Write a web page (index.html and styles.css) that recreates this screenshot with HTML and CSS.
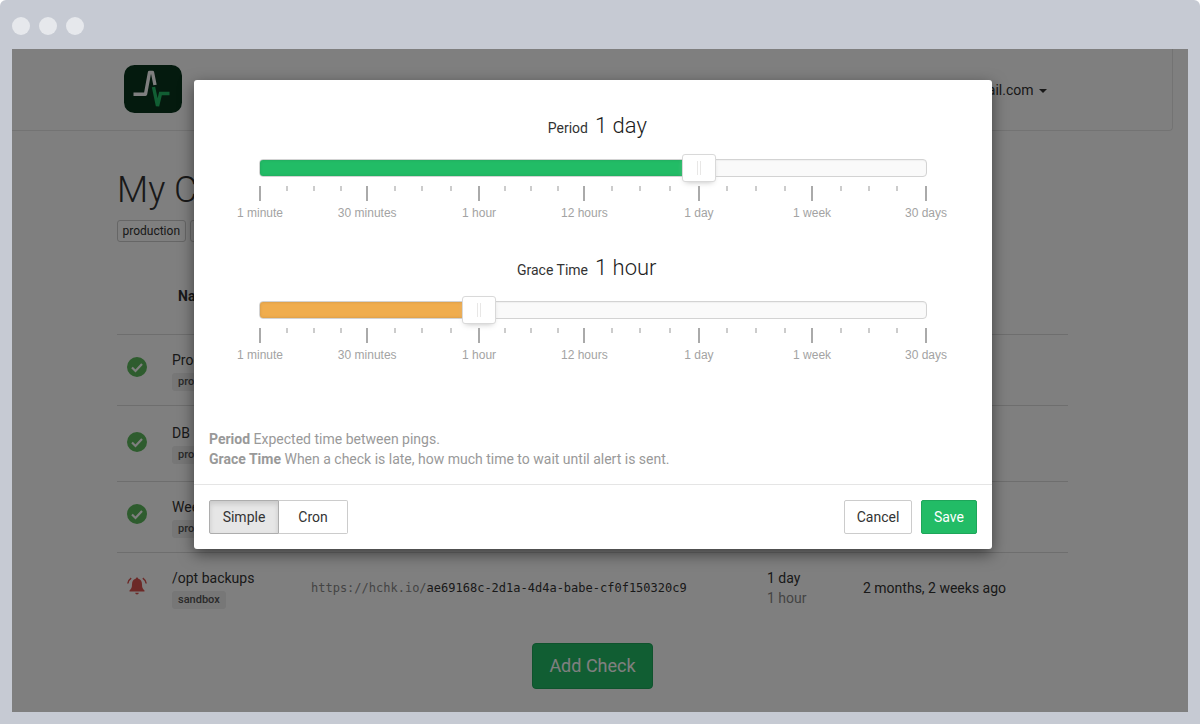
FILE: index.html
```html
<!DOCTYPE html>
<html lang="en">
<head>
<meta charset="utf-8">
<title>My Checks</title>
<link rel="stylesheet" href="styles.css">
</head>
<body>
<div class="frame">
  <div class="traffic"><i class="dot"></i><i class="dot"></i><i class="dot"></i></div>
  <div class="window">
    <nav class="navbar">
      <svg class="logo" viewBox="0 0 58 48" width="58" height="48" aria-hidden="true">
        <rect width="58" height="48" rx="10.500" fill="#08341d"/>
        <path d="M9.500 29.200H21.500L25.500 7.500H28.500L31 20" fill="none" stroke="#fff" stroke-width="3.400" stroke-linejoin="round"/>
        <path d="M29.500 22L33.500 41L36.500 28.500H45.500" fill="none" stroke="#22bc66" stroke-width="3.400"/>
      </svg>
      <div class="account">alice@gmail.com <i class="caret"></i></div>
    </nav>
    <main class="page">
      <h1 class="title">My Checks</h1>
      <div class="filters"><span class="filter">production</span><span class="filter">sandbox</span></div>
      <table class="checks">
        <colgroup><col class="c-icon"><col class="c-name"><col class="c-url"><col class="c-period"><col class="c-last"></colgroup>
        <thead><tr><th></th><th class="th-name">Name</th><th></th><th></th><th></th></tr></thead>
        <tbody>
          <tr>
            <td class="icon-cell"><svg class="status" viewBox="0 0 20 20"><circle cx="10" cy="10" r="10" fill="#5cb85c"/><path d="M5 10.500L8.500 14L15 7" fill="none" stroke="#fff" stroke-width="2.200"/></svg></td>
            <td><div class="name">Products</div><span class="tag">production</span></td>
            <td></td><td></td><td></td>
          </tr>
          <tr class="tall">
            <td class="icon-cell"><svg class="status" viewBox="0 0 20 20"><circle cx="10" cy="10" r="10" fill="#5cb85c"/><path d="M5 10.500L8.500 14L15 7" fill="none" stroke="#fff" stroke-width="2.200"/></svg></td>
            <td><div class="name">DB Backup</div><span class="tag">production</span></td>
            <td></td><td></td><td></td>
          </tr>
          <tr>
            <td class="icon-cell"><svg class="status" viewBox="0 0 20 20"><circle cx="10" cy="10" r="10" fill="#5cb85c"/><path d="M5 10.500L8.500 14L15 7" fill="none" stroke="#fff" stroke-width="2.200"/></svg></td>
            <td><div class="name">Weekly</div><span class="tag">production</span></td>
            <td></td><td></td><td></td>
          </tr>
          <tr>
            <td class="icon-cell"><svg class="status status-bell" viewBox="0 0 20 20"><path d="M10 1.500a1.300 1.300 0 0 1 1.300 1.300C14 3.500 15 5.500 15 8.500c0 3 .7 4.500 2.500 6v1h-15v-1c1.800-1.500 2.500-3 2.500-6 0-3 1-5 3.700-5.700A1.300 1.300 0 0 1 10 1.500zM8.200 16.800h3.600a1.800 1.800 0 0 1-3.600 0z" fill="#d9534f"/><path d="M4.200 2.200A8 8 0 0 0 .8 7.500M15.800 2.200a8 8 0 0 1 3.400 5.300" fill="none" stroke="#d9534f" stroke-width="1.500"/></svg></td>
            <td><div class="name">/opt backups</div><span class="tag">sandbox</span></td>
            <td class="url"><span class="url-base">https://hchk.io/</span>ae69168c-2d1a-4d4a-babe-cf0f150320c9</td>
            <td><div>1 day</div><div class="muted">1 hour</div></td>
            <td>2 months, 2 weeks ago</td>
          </tr>
        </tbody>
      </table>
      <div class="add-row"><button class="add-check">Add Check</button></div>
    </main>
    <div class="backdrop"></div>
    <section class="modal">
      <div class="modal-body">
        <div class="slider-block">
          <div class="slider-title"><span class="slider-label">Period</span><span class="slider-value">1 day</span></div>
          <div class="track"><div class="fill fill-period"></div><div class="handle handle-period"><i></i></div></div>
          <div class="scale">
            <i class="pip major" style="left:0%"></i><i class="pip" style="left:4.100%"></i><i class="pip" style="left:8.100%"></i><i class="pip" style="left:12.200%"></i><i class="pip major" style="left:16.100%"></i><i class="pip" style="left:20.300%"></i><i class="pip" style="left:24.300%"></i><i class="pip" style="left:28.700%"></i><i class="pip major" style="left:32.900%"></i><i class="pip" style="left:36.800%"></i><i class="pip" style="left:40.700%"></i><i class="pip" style="left:44.700%"></i><i class="pip major" style="left:48.700%"></i><i class="pip" style="left:52.900%"></i><i class="pip" style="left:57.100%"></i><i class="pip" style="left:61.600%"></i><i class="pip major" style="left:65.900%"></i><i class="pip" style="left:70.100%"></i><i class="pip" style="left:74.500%"></i><i class="pip" style="left:78.800%"></i><i class="pip major" style="left:82.900%"></i><i class="pip" style="left:87.200%"></i><i class="pip" style="left:91.400%"></i><i class="pip" style="left:95.600%"></i><i class="pip major" style="left:100%"></i>
            <span class="pip-label" style="left:0%">1 minute</span><span class="pip-label" style="left:16.100%">30 minutes</span><span class="pip-label" style="left:32.900%">1 hour</span><span class="pip-label" style="left:48.700%">12 hours</span><span class="pip-label" style="left:65.900%">1 day</span><span class="pip-label" style="left:82.900%">1 week</span><span class="pip-label" style="left:100%">30 days</span>
          </div>
        </div>
        <div class="slider-block">
          <div class="slider-title"><span class="slider-label">Grace Time</span><span class="slider-value">1 hour</span></div>
          <div class="track"><div class="fill fill-grace"></div><div class="handle handle-grace"><i></i></div></div>
          <div class="scale">
            <i class="pip major" style="left:0%"></i><i class="pip" style="left:4.100%"></i><i class="pip" style="left:8.100%"></i><i class="pip" style="left:12.200%"></i><i class="pip major" style="left:16.100%"></i><i class="pip" style="left:20.300%"></i><i class="pip" style="left:24.300%"></i><i class="pip" style="left:28.700%"></i><i class="pip major" style="left:32.900%"></i><i class="pip" style="left:36.800%"></i><i class="pip" style="left:40.700%"></i><i class="pip" style="left:44.700%"></i><i class="pip major" style="left:48.700%"></i><i class="pip" style="left:52.900%"></i><i class="pip" style="left:57.100%"></i><i class="pip" style="left:61.600%"></i><i class="pip major" style="left:65.900%"></i><i class="pip" style="left:70.100%"></i><i class="pip" style="left:74.500%"></i><i class="pip" style="left:78.800%"></i><i class="pip major" style="left:82.900%"></i><i class="pip" style="left:87.200%"></i><i class="pip" style="left:91.400%"></i><i class="pip" style="left:95.600%"></i><i class="pip major" style="left:100%"></i>
            <span class="pip-label" style="left:0%">1 minute</span><span class="pip-label" style="left:16.100%">30 minutes</span><span class="pip-label" style="left:32.900%">1 hour</span><span class="pip-label" style="left:48.700%">12 hours</span><span class="pip-label" style="left:65.900%">1 day</span><span class="pip-label" style="left:82.900%">1 week</span><span class="pip-label" style="left:100%">30 days</span>
          </div>
        </div>
        <div class="help">
          <div><strong>Period</strong> Expected time between pings.</div>
          <div><strong>Grace Time</strong> When a check is late, how much time to wait until alert is sent.</div>
        </div>
      </div>
      <footer class="modal-footer">
        <div class="btn-group"><button class="btn active">Simple</button><button class="btn">Cron</button></div>
        <div class="actions"><button class="btn btn-cancel">Cancel</button><button class="btn btn-save">Save</button></div>
      </footer>
    </section>
  </div>
</div>
</body>
</html>
```
FILE: styles.css
```css
* { box-sizing: border-box; }
html, body { margin: 0; height: 100%; }
body { background: #fff; font: 14px/20px Roboto, "Liberation Sans", sans-serif; color: #333; overflow: hidden; }
.frame { height: 724px; background: #c6cad3; border-radius: 6px 6px 0 0; padding: 0 12px 12px; display: flex; flex-direction: column; }
.traffic { height: 49px; display: flex; align-items: center; gap: 9px; padding: 3px 0 0; flex: none; }
.dot { width: 18px; height: 18px; border-radius: 50%; background: #e6e8ec; display: block; }
.window { position: relative; flex: 1; background: #fff; overflow: hidden; }
.navbar { height: 82px; width: 1161px; border: solid #e7e7e7; border-width: 0 1px 1px 0; border-radius: 0 0 4px 0; padding: 16px 0 0 112px; display: flex; justify-content: space-between; }
.logo { display: block; }
.account { padding: 15px 125px 0 0; }
.caret { display: inline-block; width: 0; height: 0; margin-left: 2px; vertical-align: middle; border-top: 4px solid; border-left: 4px solid transparent; border-right: 4px solid transparent; }
.page { padding: 0 0 0 105px; width: 1056px; }
.title { font: 300 36px/40px Roboto, sans-serif; margin: 39px 0 0; }
.filters { display: flex; gap: 4px; margin-top: 10px; }
.filter { border: 1px solid #ccc; border-radius: 3px; font-size: 12px; line-height: 19px; padding: 1px 4.500px 0; }
.checks { width: 951px; table-layout: fixed; border-collapse: collapse; margin-top: 27px; }
.c-icon { width: 47px; } .c-name { width: 139px; } .c-url { width: 456px; } .c-period { width: 96px; } .c-last { width: 213px; }
.checks th { height: 65px; padding: 0 8px 10px; text-align: left; font-weight: 700; }
.checks .th-name { padding-left: 14px; }
.checks td { height: 71px; padding: 0 8px; border-top: 1px solid #ddd; vertical-align: middle; }
.checks .tall td { height: 76px; padding-bottom: 2px; }
.checks .icon-cell { padding-bottom: 5px; }
.checks .tall .icon-cell { padding-bottom: 2px; }
.status { width: 20px; height: 20px; display: block; margin-left: 2px; }
.status-bell { margin-top: 2px; }
.name { font-size: 14px; line-height: 20px; padding-top: 2px; }
.tag { display: inline-block; background: #eee; color: #555; border-radius: 3px; font-size: 11px; font-weight: 500; line-height: 18px; padding: 0 6px; margin-top: 3px; }
.url { font: 12px/20px "DejaVu Sans Mono", monospace; color: #333; }
.url-base { color: #888; }
.muted { color: #888; }
.add-row { text-align: center; margin-top: 20px; }
.add-check { width: 121px; height: 46px; padding: 0 0 2px; background: #22bc66; border: 1px solid #1ea65a; border-radius: 4px; color: #fff; font: 18px Roboto, sans-serif; }
.backdrop { position: absolute; inset: 0; background: rgba(0,0,0,.5); }
.modal { position: absolute; left: 182px; top: 31px; width: 798px; background: #fff; border-radius: 3px; box-shadow: 0 5px 15px rgba(0,0,0,.5); }
.modal-body { padding: 31px 15px 15px; }
.slider-block { height: 142px; padding: 0 50px; }
.slider-title { height: 30px; display: grid; grid-template-columns: 329px 1fr; column-gap: 7px; align-items: baseline; line-height: 30px; }
.slider-label { text-align: right; }
.slider-value { font-size: 22px; font-weight: 300; color: #1c1c1c; }
.track { position: relative; height: 18px; margin-top: 18px; background: #fafafa; border: 1px solid #d3d3d3; border-radius: 4px; box-shadow: inset 0 1px 1px #f0f0f0; }
.fill { height: 100%; border-radius: 3px 0 0 3px; box-shadow: inset 0 0 3px rgba(51,51,51,.19); }
.fill-period { width: 66%; background: #22bc66; }
.fill-grace { width: 33%; background: #f0ad4e; }
.handle { position: absolute; top: -6px; width: 34px; height: 28px; margin-left: -17px; background: #fff; border: 1px solid #d9d9d9; border-radius: 3px; box-shadow: 0 3px 6px -3px #bbb; display: flex; align-items: center; justify-content: center; }
.handle-period { left: 65.900%; }
.handle-grace { left: 32.900%; }
.handle i { width: 4px; height: 14px; border: solid #e8e7e6; border-width: 0 1px; }
.scale { position: relative; margin: 9px 1px 0; height: 40px; }
.pip { position: absolute; top: 0; width: 2px; height: 5px; margin-left: -1px; background: #ccc; }
.pip.major { height: 15px; background: #aaa; }
.pip-label { position: absolute; top: 20px; transform: translateX(-50%); font: 12px/14px "Liberation Sans", Arial, sans-serif; color: #a3a3a3; white-space: nowrap; }
.help { margin-top: 34px; color: #999; line-height: 20px; }
.modal-footer { border-top: 1px solid #e5e5e5; padding: 15px; display: flex; justify-content: space-between; }
.btn-group { display: flex; }
.btn { height: 34px; padding: 0 12px; background: #fff; border: 1px solid #ccc; border-radius: 2px; color: #333; font: 14px Roboto, sans-serif; }
.btn-group .btn { width: 69px; }
.btn-group .btn:first-child { width: 70px; border-radius: 2px 0 0 2px; }
.btn-group .btn:last-child { border-left: 0; border-radius: 0 2px 2px 0; }
.btn.active { background: #e6e6e6; border-color: #adadad; box-shadow: inset 0 3px 5px rgba(0,0,0,.125); }
.actions { display: flex; gap: 9px; }
.btn-cancel { width: 68px; padding: 0; }
.btn-save { background: #22bc66; border-color: #1ea65a; color: #fff; }
```
